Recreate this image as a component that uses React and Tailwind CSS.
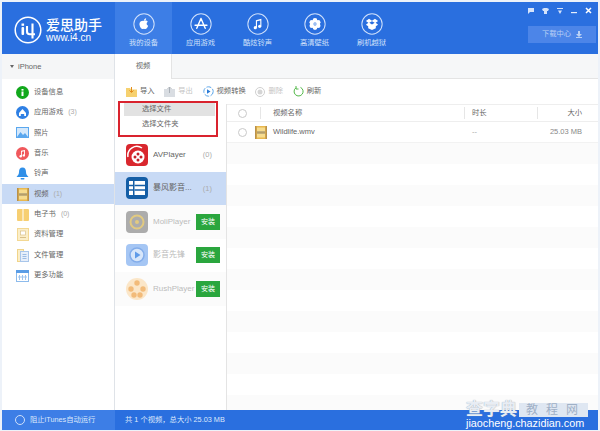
import React from "react";

const font = { fontFamily: '"Liberation Sans","Noto Sans CJK SC",sans-serif' };

function Circle({ children }) {
  return (
    <svg width="22" height="22" viewBox="0 0 26 26" fill="none">
      <circle cx="13" cy="13" r="12" stroke="#cfe0fb" strokeWidth="1.200" />
      {children}
    </svg>
  );
}

const navItems = [
  {
    label: "我的设备",
    active: true,
    icon: (
      <path d="M13.200 9.400c1.100-.6 3-.9 4.200.8-2 1.300-1.600 4 .5 4.800-.7 1.800-1.900 3.900-3.200 3.900-.8 0-1-.4-1.800-.4s-1.100.4-1.800.4c-1.600 0-3.500-3.400-3.500-5.800 0-2.800 2.700-4.300 5.600-3.700zM13 9c0-1.500 1-2.600 2.500-2.800.1 1.600-.9 2.700-2.500 2.800z" fill="#fff" />
    ),
  },
  {
    label: "应用游戏",
    icon: <path d="M13 6.500l-5 11.500M13 6.500l5 11.500M6 14.500h14" stroke="#fff" strokeWidth="1.700" strokeLinecap="round" />,
  },
  {
    label: "酷炫铃声",
    icon: (
      <g fill="#fff">
        <path d="M10.500 8.500l6.500-1.700v8.700h-1.300V8.800l-3.900 1v7.500h-1.300z" />
        <circle cx="9.800" cy="17.300" r="1.900" />
        <circle cx="15" cy="15.700" r="1.900" />
      </g>
    ),
  },
  {
    label: "高清壁纸",
    icon: (
      <g fill="#fff">
        <circle cx="13" cy="8.800" r="2.800" />
        <circle cx="13" cy="17.200" r="2.800" />
        <circle cx="9.300" cy="11" r="2.800" />
        <circle cx="16.700" cy="11" r="2.800" />
        <circle cx="9.300" cy="15" r="2.800" />
        <circle cx="16.700" cy="15" r="2.800" />
        <circle cx="13" cy="13" r="2" fill="#9dbff2" />
      </g>
    ),
  },
  {
    label: "刷机越狱",
    icon: (
      <path d="M9.500 6.800L13 9.300l3.500-2.500 3.700 2.600-2.900 2.200 2.900 2.300-2.700 1.700v2.400L13 20l-4.500-2v-2.400L5.800 13.900l2.900-2.300-2.900-2.200z M9.800 11.500L13 13.600l3.200-2.100L13 9.700z" fill="#fff" fillRule="evenodd" />
    ),
  },
];

function VideoIcon() {
  return (
    <svg width="12" height="13" viewBox="0 0 12 13">
      <rect width="12" height="13" fill="#e9b84f" />
      <rect x="0" y="0" width="1.500" height="13" fill="#b9914a" />
      <rect x="10.500" y="0" width="1.500" height="13" fill="#b9914a" />
      <rect x="2" y="1.500" width="8" height="4.200" fill="#f7dc8e" />
      <rect x="2" y="7.300" width="8" height="4.200" fill="#f7dc8e" />
      <path d="M2 5.900h8M2 7.100h8" stroke="#8e8a7c" strokeWidth=".8" />
    </svg>
  );
}

function SideIcon({ type }) {
  switch (type) {
    case "info":
      return (
        <svg width="13" height="13" viewBox="0 0 13 13">
          <circle cx="6.500" cy="6.500" r="6.500" fill="#12a81c" />
          <rect x="5.500" y="5.500" width="2" height="4.500" fill="#fff" />
          <rect x="5.500" y="3" width="2" height="1.600" fill="#fff" />
        </svg>
      );
    case "app":
      return (
        <svg width="13" height="13" viewBox="0 0 13 13">
          <circle cx="6.500" cy="6.500" r="6.500" fill="#2f80e4" />
          <path d="M6.500 3L10 7v3H8.200V8H4.800v2H3V7z" fill="#fff" />
        </svg>
      );
    case "photo":
      return (
        <svg width="13" height="11" viewBox="0 0 13 11">
          <rect width="13" height="11" fill="#5aa7ee" />
          <rect x="1" y="1" width="11" height="9" fill="#d4e8fb" />
          <path d="M1 10l3.500-5 2.500 3 2-2 3 4z" fill="#5aa7ee" />
        </svg>
      );
    case "music":
      return (
        <svg width="13" height="13" viewBox="0 0 13 13">
          <circle cx="6.500" cy="6.500" r="6.500" fill="#f0585c" />
          <path d="M5 3.800l4-.8v5.200h-.9V4.300L5.900 4.800v4.400H5z" fill="#fff" />
          <circle cx="4.700" cy="9.300" r="1.200" fill="#fff" />
          <circle cx="7.800" cy="8.400" r="1.200" fill="#fff" />
        </svg>
      );
    case "bell":
      return (
        <svg width="13" height="13" viewBox="0 0 13 13">
          <path d="M6.500 0.500c2.500 0 3.500 2 3.500 4.500 0 2 1 3.500 2.500 5H.5C2 8.500 3 7 3 5c0-2.500 1-4.500 3.500-4.500z" fill="#2f8fe8" />
          <rect x="4.500" y="11" width="4" height="1.500" rx=".7" fill="#2f8fe8" />
        </svg>
      );
    case "video":
      return <VideoIcon />;
    case "book":
      return (
        <svg width="12" height="12" viewBox="0 0 12 12">
          <rect width="12" height="12" rx="1" fill="#f7cf72" />
          <rect x="5.500" y="0" width="1" height="12" fill="#fff" />
        </svg>
      );
    case "data":
      return (
        <svg width="12" height="13" viewBox="0 0 12 13">
          <rect x=".5" y=".5" width="11" height="12" fill="#fff" stroke="#f3d893" />
          <rect x="1" y="1" width="10" height="11" fill="#fbeec8" />
          <rect x="3.500" y="3" width="5" height="4" fill="#fff" stroke="#d9c189" strokeWidth=".7" />
          <path d="M3 9.500h6" stroke="#d9c189" />
        </svg>
      );
    case "file":
      return (
        <svg width="12" height="13" viewBox="0 0 12 13">
          <rect x=".5" y=".5" width="6" height="12" fill="#fbeec8" stroke="#f0d48a" />
          <rect x="3.500" y="2.500" width="8" height="10" fill="#e7effa" stroke="#a9c6ea" />
          <path d="M5.500 5.500h4M5.500 7.500h4M5.500 9.500h4" stroke="#7ba6da" strokeWidth=".7" />
        </svg>
      );
    default:
      return (
        <svg width="13" height="12" viewBox="0 0 13 12">
          <rect x=".5" y=".5" width="12" height="11" fill="#fff" stroke="#8dbbec" />
          <rect x="0" y="0" width="13" height="3" fill="#5a9de6" />
          <path d="M3.500 5v5M6.500 5v5M9.500 5v5M2 7h9" stroke="#9cc3ee" />
        </svg>
      );
  }
}

const sideItems = [
  ["info", "设备信息"],
  ["app", "应用游戏", "(3)"],
  ["photo", "照片"],
  ["music", "音乐"],
  ["bell", "铃声"],
  ["video", "视频", "(1)", true],
  ["book", "电子书", "(0)"],
  ["data", "资料管理"],
  ["file", "文件管理"],
  ["more", "更多功能"],
];

function AppIcon({ kind }) {
  if (kind === "av")
    return (
      <svg width="22" height="22" viewBox="0 0 22 22">
        <rect width="22" height="22" rx="4" fill="#d9272e" />
        <path d="M2 13A9 9 0 0 1 16 4" stroke="#fff" strokeWidth="1.500" fill="none" />
        <circle cx="12" cy="13" r="6.500" fill="#fff" />
        <g fill="#c41f27">
          <circle cx="12" cy="10" r="1.500" />
          <circle cx="12" cy="16" r="1.500" />
          <circle cx="9" cy="13" r="1.500" />
          <circle cx="15" cy="13" r="1.500" />
        </g>
      </svg>
    );
  if (kind === "bf")
    return (
      <svg width="22" height="22" viewBox="0 0 22 22">
        <rect width="22" height="22" rx="4" fill="#145ea6" />
        <rect x="3" y="4" width="16" height="14" fill="#fff" />
        <path d="M3 8.500h4M3 13h4" stroke="#145ea6" strokeWidth="1.500" />
        <rect x="7" y="4" width="1.500" height="14" fill="#145ea6" />
        <path d="M8.500 8.500h11M8.500 13h11" stroke="#145ea6" strokeWidth="1.500" />
      </svg>
    );
  if (kind === "moli")
    return (
      <svg width="22" height="22" viewBox="0 0 22 22">
        <rect width="22" height="22" rx="4" fill="#acacac" />
        <circle cx="11" cy="11" r="6.500" fill="none" stroke="#e2ca80" strokeWidth="2" />
        <circle cx="11" cy="11" r="2" fill="#e2ca80" />
      </svg>
    );
  if (kind === "yy")
    return (
      <svg width="22" height="22" viewBox="0 0 22 22">
        <rect width="22" height="22" rx="4" fill="#a5c6f4" />
        <circle cx="11" cy="11" r="7" fill="#d7e6fa" stroke="#83adea" strokeWidth="1.500" />
        <path d="M9 7.500l5.500 3.500L9 14.500z" fill="#5f9be8" />
      </svg>
    );
  return (
    <svg width="24" height="24" viewBox="0 0 24 24" className="shrink-0">
      <circle cx="12" cy="12" r="11" fill="#fbe6c8" />
      <g fill="#f2bb7a">
        <circle cx="12" cy="6" r="2.700" />
        <circle cx="6" cy="12" r="2.700" />
        <circle cx="18" cy="12" r="2.700" />
        <circle cx="9" cy="18" r="2.700" />
        <circle cx="15" cy="18" r="2.700" />
      </g>
    </svg>
  );
}

function Row({ kind, name, count, install, selected, alt }) {
  return (
    <div className={`flex h-[33.500px] items-center pl-[11px] pr-[6px] ${selected ? "bg-[#c8daf5]" : alt ? "bg-[#fbfbfb]" : "bg-white"}`}>
      <span className="flex w-[22px] items-center justify-center">
        <AppIcon kind={kind} />
      </span>
      <span className={`ml-[5px] min-w-0 flex-1 truncate text-[8px] ${install ? "text-[#bbb]" : "text-[#666]"}`}>{name}</span>
      {install ? (
        <span className="flex h-[16px] w-[24px] items-center justify-center bg-[#2aa63e] text-[7px] text-white">安装</span>
      ) : (
        <span className="mr-[8px] text-[7.500px] text-[#aaa]">{count}</span>
      )}
    </div>
  );
}

function Tool({ icon, label, muted }) {
  return (
    <div className={`flex items-center gap-[3px] text-[7.300px] ${muted ? "text-[#c4c4c4]" : "text-[#666]"}`}>
      {icon}
      <span>{label}</span>
    </div>
  );
}

export default function App() {
  return (
    <div className="relative h-[431px] w-[600px] overflow-hidden bg-[#edf2f9] p-[2px]" style={font}>
      <div className="flex h-[428px] w-[596px] flex-col overflow-hidden bg-white">
        {/* header */}
        <header className="flex h-[52px] shrink-0 bg-[#2a6fdf] text-white">
          <div className="flex w-[113px] shrink-0 items-center pl-[12px] pt-[4px]">
            <svg width="28" height="28" viewBox="0 0 28 28" fill="none">
              <circle cx="14" cy="14" r="12.800" stroke="#fff" strokeWidth="1.500" />
              <rect x="7.500" y="11" width="2.600" height="8" rx="1" fill="#fff" />
              <rect x="7.500" y="7.500" width="2.600" height="2.300" fill="#fff" />
              <path d="M13 10v5.500c0 1.800.9 2.700 2.700 2.700H21M18.500 7.500v15" stroke="#fff" strokeWidth="2.100" />
            </svg>
            <div className="ml-[4px] flex flex-col">
              <span className="text-[14px] font-medium leading-[15px]">爱思助手</span>
              <span className="text-[10px] leading-[10px]">www.i4.cn</span>
            </div>
          </div>
          <nav className="flex">
            {navItems.map((n) => (
              <div key={n.label} className={`flex h-full w-[57px] flex-col items-center pt-[11px] ${n.active ? "bg-[#3d7ee6]" : ""}`}>
                <Circle>{n.icon}</Circle>
                <span className="mt-[3px] text-[7.300px] leading-[9px] text-[#cfe0fa]">{n.label}</span>
              </div>
            ))}
          </nav>
          <div className="flex flex-1 flex-col items-end pr-[2px]">
            <div className="mt-[3px] flex h-[11px] items-center gap-[8px] pr-[4px]">
              <svg width="6" height="6" viewBox="0 0 6 6"><path d="M0 0h6v4H2L0 6z" fill="#d5e3fa" /></svg>
              <svg width="7" height="6" viewBox="0 0 7 6"><path d="M0 1l2-1h3l2 1-1 2H5v3H2V3H1z" fill="#d5e3fa" /></svg>
              <svg width="6" height="6" viewBox="0 0 6 6"><path d="M0 0h6v1H0zM1 2.500h4L3 6z" fill="#d5e3fa" /></svg>
              <svg width="6" height="6" viewBox="0 0 6 6"><path d="M0 4h6v1.200H0z" fill="#e6eefb" /></svg>
              <svg width="7" height="7" viewBox="0 0 7 7"><path d="M1 1l5 5M6 1L1 6" stroke="#fff" strokeWidth="1.500" /></svg>
            </div>
            <div className="mt-[10px] flex h-[17px] w-[68px] items-center justify-center gap-[5px] bg-[#4c85e8] text-[7.300px] text-[#b9d0f5]">
              <span>下载中心</span>
              <svg width="6" height="7" viewBox="0 0 6 7"><path d="M2 0h2v3h2L3 6 0 3h2zM0 6h6v1H0z" fill="#b9d0f5" /></svg>
            </div>
          </div>
        </header>

        {/* body */}
        <div className="flex min-h-0 flex-1">
          <aside className="flex w-[113px] shrink-0 flex-col border-r border-[#dfe3e8]">
            <div className="flex h-[25px] shrink-0 items-center bg-[#f5f6f7] pl-[8px] text-[7.500px] text-[#666]">
              <span className="mr-[4px] h-0 w-0 border-x-[2.500px] border-t-[3px] border-x-transparent border-t-[#666]" />
              iPhone
            </div>
            <div className="pt-[3px]">
              {sideItems.map(([t, label, count, sel]) => (
                <div key={label} className={`flex h-[20.400px] items-center ${sel ? "bg-[#c8daf5]" : ""}`}>
                  <span className="flex w-[32px] items-center justify-center pl-[9px]">
                    <SideIcon type={t} />
                  </span>
                  <span className="text-[7.300px] text-[#666]">{label}</span>
                  {count && <span className="ml-[5px] text-[7px] text-[#aaa]">{count}</span>}
                </div>
              ))}
            </div>
          </aside>

          <main className="flex min-w-0 flex-1 flex-col">
            {/* tab strip */}
            <div className="flex h-[25px] shrink-0 border-b border-[#e4e4e4] bg-[#f6f7f8]">
              <div className="-mb-px flex w-[57px] items-center justify-center border-r border-[#e4e4e4] bg-white text-[7.300px] text-[#666]">视频</div>
            </div>
            {/* toolbar */}
            <div className="flex h-[25px] shrink-0 items-center gap-[9.700px] pl-[11px]">
              <Tool
                label="导入"
                icon={
                  <svg width="11" height="10" viewBox="0 0 11 10">
                    <path d="M0 1h4l1 1.500h6V10H0z" fill="#f6d16f" />
                    <path d="M5.500 0v5M3.500 3.500l2 2 2-2" stroke="#e28b1c" fill="none" />
                  </svg>
                }
              />
              <Tool
                muted
                label="导出"
                icon={
                  <svg width="11" height="10" viewBox="0 0 11 10">
                    <path d="M0 2h11v8H0z" fill="#d9dde2" />
                    <path d="M5.500 6V0M3.500 2l2-2 2 2" stroke="#a9afb6" fill="none" />
                  </svg>
                }
              />
              <Tool
                label="视频转换"
                icon={
                  <svg width="11" height="11" viewBox="0 0 11 11">
                    <circle cx="5.500" cy="5.500" r="4.700" fill="none" stroke="#59a4e8" strokeDasharray="5 1.500" />
                    <path d="M4 3.200l3.500 2.300L4 7.800z" fill="#2b7bd6" />
                  </svg>
                }
              />
              <Tool
                muted
                label="删除"
                icon={
                  <svg width="10" height="10" viewBox="0 0 10 10">
                    <circle cx="5" cy="5" r="4.500" fill="none" stroke="#cfcfcf" />
                    <circle cx="5" cy="5" r="2.500" fill="#d5d5d5" />
                  </svg>
                }
              />
              <Tool
                label="刷新"
                icon={
                  <svg width="11" height="11" viewBox="0 0 11 11" fill="none">
                    <path d="M7.500 1.400A4.500 4.500 0 1 1 3 1.800" stroke="#52b848" strokeWidth="1" />
                    <path d="M3 0v3h2.500" stroke="#52b848" strokeWidth="1" />
                  </svg>
                }
              />
            </div>

            <div className="flex min-h-0 flex-1">
              {/* player list */}
              <div className="flex w-[112px] shrink-0 flex-col border-r border-[#e4e4e4] pt-[34px]">
                <Row kind="av" name="AVPlayer" count="(0)" />
                <Row kind="bf" name="暴风影音..." count="(1)" selected />
                <Row kind="moli" name="MoliPlayer" install alt />
                <Row kind="yy" name="影音先锋" install />
                <Row kind="rush" name="RushPlayer" install alt />
              </div>

              {/* table */}
              <div className="min-w-0 flex-1">
                <div className="flex h-[18px] items-center border-y border-[#eeeeee] text-[7.300px] text-[#666]">
                  <span className="ml-[11px] h-[9px] w-[9px] rounded-full border border-[#c9c9c9]" />
                  <span className="ml-[13px] h-[12px] border-l border-[#e6e6e6]" />
                  <span className="ml-[12px] flex-1">视频名称</span>
                  <span className="h-[12px] border-l border-[#e6e6e6]" />
                  <span className="ml-[7px] w-[65px]">时长</span>
                  <span className="h-[12px] border-l border-[#e6e6e6]" />
                  <span className="w-[60px] pr-[16px] text-right">大小</span>
                </div>
                <div className="flex h-[21px] items-center border-b border-[#f2f2f2] text-[7.500px] text-[#666]">
                  <span className="ml-[11px] h-[9px] w-[9px] rounded-full border border-[#c9c9c9]" />
                  <span className="ml-[8px] flex">
                    <VideoIcon />
                  </span>
                  <span className="ml-[6px] flex-1">Wildlife.wmv</span>
                  <span className="w-[66px] text-[#aaa]">--</span>
                  <span className="w-[60px] pr-[16px] text-right text-[#888]">25.03 MB</span>
                </div>
                {Array.from({ length: 13 }).map((_, i) => (
                  <div key={i} className={`h-[21px] ${i % 2 === 0 ? "bg-[#fbfbfb]" : "bg-white"}`} />
                ))}
              </div>
            </div>
          </main>
        </div>

        {/* footer */}
        <footer className="flex h-[20px] shrink-0 items-center bg-[#2a6fdf] text-[7.300px] text-[#dce8fb]">
          <div className="flex h-full w-[113px] items-center bg-[#3d7ee6] pl-[13px]">
            <span className="h-[10px] w-[10px] rounded-full border border-[#cfe0fa]" />
            <span className="ml-[5px]">阻止iTunes自动运行</span>
          </div>
          <span className="ml-[10px]">共 1 个视频，总大小 25.03 MB</span>
        </footer>
      </div>

      {/* dropdown with annotation */}
      <div className="absolute left-[118px] top-[101px] h-[36px] w-[100px] border-2 border-[#d9232e] bg-white pl-[4px] pr-px text-[7.300px] text-[#666]">
        <div className="flex h-[13px] items-center bg-[#e2e2e2] pl-[18px]">选择文件</div>
        <div className="flex h-[17px] items-center pl-[18px]">选择文件夹</div>
      </div>

      {/* watermark */}
      <div className="absolute bottom-[2px] right-[12px] flex flex-col items-start">
        <div className="flex items-center">
          <span className="text-[17px] font-bold leading-[16px] text-[#e8edf4] [text-shadow:0_0_1px_#8a97a8]">查字典</span>
          <span className="ml-[2px] bg-[#dfe7f2] pl-[7px] pr-[2px] text-[12px] leading-[14px] tracking-[8px] text-[#9fb0c6]">教程网</span>
        </div>
        <span className="text-[10.800px] leading-[11px] text-white">jiaocheng.chazidian.com</span>
      </div>
    </div>
  );
}
